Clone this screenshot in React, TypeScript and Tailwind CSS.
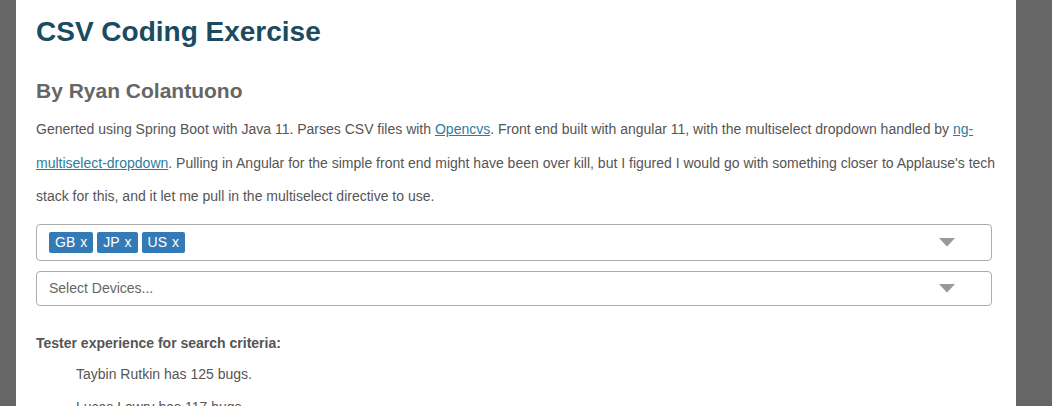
import React from 'react';

const tags = ['GB', 'JP', 'US'];

const testers = [
  { name: 'Taybin Rutkin', bugs: 125 },
  { name: 'Lucas Lowry', bugs: 117 },
  { name: 'Sean Wellington', bugs: 116 },
];

function Caret() {
  return (
    <svg width="16" height="9" viewBox="0 0 16 9" className="shrink-0">
      <path d="M0 0 L16 0 L8 8.5 Z" fill="#999999" />
    </svg>
  );
}

function MultiSelect({ selected, placeholder }: { selected?: string[]; placeholder: string }) {
  const hasItems = selected && selected.length > 0;
  return (
    <div
      className={`flex items-center w-[956px] rounded-[4px] border border-[#adadad] bg-white pl-[12px] pr-[36px] ${
        hasItems ? 'h-[37px]' : 'h-[35px]'
      }`}
    >
      <div className="flex-1 flex items-center gap-[4px]">
        {hasItems ? (
          selected!.map((t) => (
            <span
              key={t}
              className="flex items-center h-[21px] rounded-[2px] bg-[#337ab7] px-[6px] text-[14px] text-white leading-none"
            >
              {t}
              <span className="ml-[5px]">x</span>
            </span>
          ))
        ) : (
          <span className="text-[14px] text-[#666666]">{placeholder}</span>
        )}
      </div>
      <Caret />
    </div>
  );
}

export default function App() {
  return (
    <div className="min-h-[406px] bg-[#666666] pl-[16px] font-['Liberation_Sans',Arial,sans-serif]">
      <div className="w-[1000px] min-h-[406px] bg-white px-[20px] pt-[15px]">
        <h1 className="text-[28px] font-bold leading-[34px] text-[#1b4b5e]">CSV Coding Exercise</h1>

        <h2 className="mt-[29px] text-[21px] font-bold leading-[26px] text-[#666666]">By Ryan Colantuono</h2>

        <p className="mt-[9px] text-[14px] leading-[33.5px] text-[#555555]">
          Generted using Spring Boot with Java 11. Parses CSV files with{' '}
          <a href="#" className="text-[#2d7da0] underline">Opencvs</a>. Front end built with angular 11, with the
          multiselect dropdown handled by{' '}
          <a href="#" className="text-[#2d7da0] underline">ng-multiselect-dropdown</a>. Pulling in Angular for the
          simple front end might have been over kill, but I figured I would go with something closer to Applause's
          tech stack for this, and it let me pull in the multiselect directive to use.
        </p>

        <div className="mt-[10px] flex flex-col gap-[10px]">
          <MultiSelect selected={tags} placeholder="Select Countries..." />
          <MultiSelect placeholder="Select Devices..." />
        </div>

        <div className="mt-[27px] text-[14px] font-bold leading-[20px] text-[#555555]">
          Tester experience for search criteria:
        </div>
        <ul className="mt-[5px] pl-[40px] text-[14px] leading-[33px] text-[#555555]">
          {testers.map((t) => (
            <li key={t.name}>
              {t.name} has {t.bugs} bugs.
            </li>
          ))}
        </ul>
      </div>
    </div>
  );
}
